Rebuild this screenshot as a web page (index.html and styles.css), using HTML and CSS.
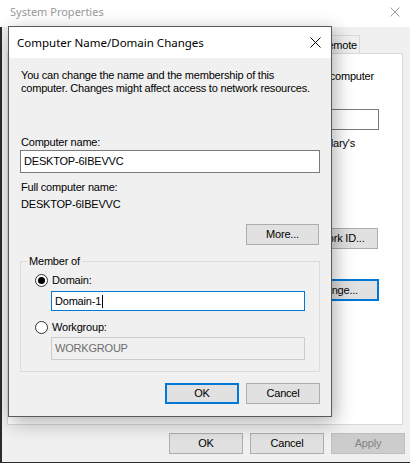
FILE: index.html
```html
<!DOCTYPE html>
<html>
<head>
<meta charset="utf-8">
<link rel="stylesheet" href="styles.css">
</head>
<body>
<div class="win">
  <div class="win-title">
    <span class="win-title-text">System Properties</span>
    <svg class="win-close" width="10" height="10" viewBox="0 0 10 10"><path d="M0.5 0.5L9.5 9.5M9.5 0.5L0.5 9.5" stroke="#999" stroke-width="1" fill="none"/></svg>
  </div>
  <div class="win-body">
    <div class="tabs">
      <div class="tab">Remote</div>
    </div>
    <div class="panel">
      <div class="pline pline-1">computer</div>
      <div class="ptext"></div>
      <div class="pline pline-2">Mary's</div>
      <button class="btn btn-netid">Network ID...</button>
      <button class="btn btn-change btn-default">Change...</button>
    </div>
    <div class="win-buttons">
      <button class="btn btn-wide">OK</button>
      <button class="btn btn-wide">Cancel</button>
      <button class="btn btn-wide btn-disabled">Apply</button>
    </div>
  </div>
</div>

<div class="dialog">
  <div class="dlg-title">
    <span class="dlg-title-text">Computer Name/Domain Changes</span>
    <svg class="dlg-close" width="11" height="11" viewBox="0 0 11 11"><path d="M0.5 0.5L10.5 10.5M10.5 0.5L0.5 10.5" stroke="#000" stroke-width="1" fill="none"/></svg>
  </div>
  <div class="dlg-body">
    <p class="intro">You can change the name and the membership of this<br>computer. Changes might affect access to network resources.</p>
    <div class="label label-name">Computer name:</div>
    <div class="textbox tb-name">DESKTOP-6IBEVVC</div>
    <div class="label label-full">Full computer name:</div>
    <div class="label label-fullval">DESKTOP-6IBEVVC</div>
    <button class="btn btn-more">More...</button>
    <fieldset class="group">
      <legend class="group-legend">Member of</legend>
      <div class="radio-row"><span class="radio radio-on"></span><span>Domain:</span></div>
      <div class="textbox tb-domain">Domain-1<span class="caret"></span></div>
      <div class="radio-row radio-row-2"><span class="radio"></span><span>Workgroup:</span></div>
      <div class="textbox tb-work">WORKGROUP</div>
    </fieldset>
    <div class="dlg-buttons">
      <button class="btn btn-wide btn-default">OK</button>
      <button class="btn btn-wide">Cancel</button>
    </div>
  </div>
</div>
</body>
</html>
```

FILE: styles.css
```css
* { box-sizing: border-box; }
html, body { margin: 0; padding: 0; }
body {
  width: 410px;
  height: 463px;
  overflow: hidden;
  position: relative;
  background: #f0f0f0;
  font-family: "Liberation Sans", Arial, sans-serif;
  font-size: 11px;
  line-height: 13px;
  letter-spacing: -0.2px;
  color: #000;
}

/* buttons (base) */
.btn {
  font-family: "Liberation Sans", Arial, sans-serif;
  font-size: 11px;
  letter-spacing: -0.2px;
  color: #000;
  background: #e1e1e1;
  border: 1px solid #adadad;
  padding: 0;
  margin: 0;
  height: 21px;
  line-height: 13px;
}
.btn-wide { width: 74px; }
.btn-default { border: 2px solid #0078d7; }
.btn-disabled { background: #cccccc; border-color: #bfbfbf; color: #838383; }

/* back window */
.win { display: flex; flex-direction: column; height: 463px; }
.win-title {
  height: 27px;
  background: #fff;
  display: flex;
  justify-content: space-between;
  align-items: flex-start;
  padding: 4px 10px 0 10px;
}
.win-title-text {
  font-family: "Noto Sans", "Liberation Sans", sans-serif;
  font-size: 11px;
  letter-spacing: 0;
  line-height: 16px;
  color: #999;
}
.win-close { margin-top: 3px; }
.win-body {
  flex: 1;
  display: flex;
  flex-direction: column;
  border-left: 2px solid #2b2b2b;
  border-bottom: 1px solid #2b2b2b;
  padding: 8px 7px 8px 5px;
}
.tabs {
  display: flex;
  justify-content: flex-end;
  height: 18px;
  padding-right: 43px;
}
.tab {
  border: 1px solid #d9d9d9;
  border-bottom: none;
  padding: 2px 2px 0 5px;
  background: #f0f0f0;
  line-height: 14px;
}
.panel {
  flex: 1;
  background: #fff;
  border: 1px solid #d9d9d9;
  display: flex;
  flex-direction: column;
  align-items: flex-end;
  padding: 16px 23px 0 12px;
}
.pline { white-space: nowrap; }
.pline-1 { margin-right: 5px; }
.ptext {
  width: 200px;
  height: 21px;
  margin-top: 26px;
  border: 1px solid #7a7a7a;
  background: #fff;
}
.pline-2 { margin-top: 7px; margin-right: 24px; }
.btn-netid { margin-top: 78px; width: 88px; height: 21px; margin-right: 1px; }
.btn-change { margin-top: 30px; width: 88px; height: 22px; }

.win-buttons {
  display: flex;
  justify-content: flex-end;
  gap: 7px;
  margin-top: 8px;
  margin-right: -2px;
}

/* dialog */
.dialog {
  position: absolute;
  left: 8px;
  top: 26px;
  width: 324px;
  height: 391px;
  border: 1px solid #5a5a5a;
  background: #f0f0f0;
  display: flex;
  flex-direction: column;
  box-shadow: 3px 5px 18px rgba(0, 0, 0, 0.32);
}
.dlg-title {
  height: 31px;
  flex: none;
  background: #fff;
  display: flex;
  align-items: center;
  justify-content: space-between;
  padding: 0 10px 0 8px;
}
.dlg-title-text {
  font-family: "Noto Sans", "Liberation Sans", sans-serif;
  font-size: 11.5px;
  letter-spacing: 0;
  color: #000;
}
.dlg-body {
  flex: 1;
  display: flex;
  flex-direction: column;
  padding: 11px 11px 0 11px;
}
.intro { margin: 0 0 0 1px; white-space: nowrap; }
.label { margin-left: 1px; }
.label-name { margin-top: 41px; }
.textbox {
  border: 1px solid #7a7a7a;
  background: #fff;
  padding: 0 3px;
  display: flex;
  align-items: center;
  white-space: nowrap;
}
.tb-name { margin-top: 1px; height: 23px; }
.label-full { margin-top: 8px; }
.label-fullval { margin-top: 4px; }
.btn-more { align-self: flex-end; width: 73px; margin-top: 13px; margin-right: 1px; }

.group {
  margin: 10px 0 0 0;
  padding: 6px 0 11px 6px;
  border: 1px solid #dcdcdc;
  min-width: 0;
}
.group-legend { padding: 0 2px; line-height: 13px; }
.radio-row {
  display: flex;
  align-items: center;
  gap: 4px;
  margin-left: 8px;
  height: 13px;
}
.radio-row-2 { margin-top: 10px; }
.radio {
  width: 13px;
  height: 13px;
  border: 1px solid #333;
  border-radius: 50%;
  background: #fff;
  display: flex;
  align-items: center;
  justify-content: center;
  flex: none;
}
.radio-on::after {
  content: "";
  width: 7px;
  height: 7px;
  border-radius: 50%;
  background: #000;
}
.tb-domain {
  margin: 4px 0 0 24px;
  width: 254px;
  height: 20px;
  border-color: #0078d7;
}
.caret { width: 1px; height: 13px; background: #000; margin-left: 1px; }
.tb-work {
  margin: 3px 0 0 24px;
  width: 254px;
  height: 23px;
  background: #f0f0f0;
  border-color: #cccccc;
  color: #6d6d6d;
}
.dlg-buttons {
  display: flex;
  justify-content: flex-end;
  gap: 7px;
  margin-top: 11px;
}
```
